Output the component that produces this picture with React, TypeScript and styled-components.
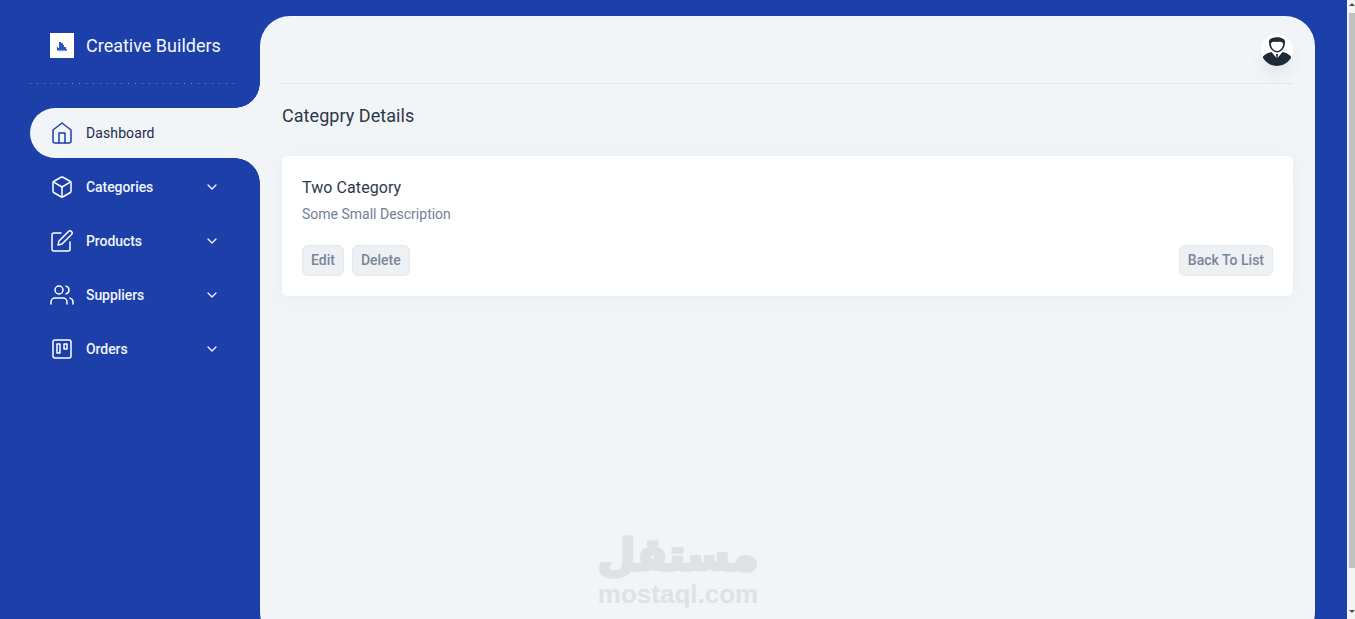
import React from "react";
import styled, { createGlobalStyle } from "styled-components";
import { FiBox, FiChevronDown, FiEdit, FiHome, FiTrello, FiUsers } from "react-icons/fi";

const BLUE = "#1c3faa";
const LIGHT = "#f1f5f8";

const GlobalStyle = createGlobalStyle`
  html, body {
    margin: 0;
    height: 100%;
    overflow: hidden;
    font-family: "Roboto", "Liberation Sans", sans-serif;
  }
`;

const Page = styled.div`
  display: flex;
  height: 619px;
  overflow: hidden;
  background: ${BLUE};
`;

const Sidebar = styled.nav`
  flex: 0 0 230px;
  margin-left: 30px;
  display: flex;
  flex-direction: column;
`;

const Brand = styled.div`
  display: flex;
  align-items: center;
  gap: 12px;
  height: 84px;
  padding: 6px 0 0 20px;
  box-sizing: border-box;
  margin-right: 22px;
  background-image: linear-gradient(to right, rgba(255, 255, 255, 0.4) 1px, transparent 1px);
  background-size: 7px 1px;
  background-repeat: repeat-x;
  background-position: left bottom;
`;

const LogoBox = styled.div`
  width: 24px;
  height: 25px;
  margin-top: 1px;
  background: #fff;
  display: flex;
  align-items: center;
  justify-content: center;
`;

const BrandName = styled.span`
  color: #f4f7fd;
  font-size: 18px;
  font-weight: 400;
`;

const Menu = styled.div`
  display: flex;
  flex-direction: column;
  gap: 4px;
  margin-top: 24px;
`;

const Item = styled.a<{ $active?: boolean }>`
  position: relative;
  display: flex;
  align-items: center;
  height: 50px;
  padding-left: 20px;
  color: ${(p) => (p.$active ? "#1f2a4d" : "#f1f4fb")};
  background: ${(p) => (p.$active ? LIGHT : "transparent")};
  border-radius: 25px 0 0 25px;
  font-size: 14px;
  font-weight: ${(p) => (p.$active ? 400 : 500)};
  letter-spacing: ${(p) => (p.$active ? "0.1px" : "-0.07px")};

  ${(p) =>
    p.$active &&
    `
    &::before, &::after {
      content: "";
      position: absolute;
      right: 0;
      width: 25px;
      height: 25px;
    }
    &::before {
      top: -25px;
      background: radial-gradient(circle at 0 0, ${BLUE} 24.5px, ${LIGHT} 25px);
    }
    &::after {
      bottom: -25px;
      background: radial-gradient(circle at 0 100%, ${BLUE} 24.5px, ${LIGHT} 25px);
    }
  `}
`;

const ItemIcon = styled.span<{ $active?: boolean }>`
  display: flex;
  width: 24px;
  margin-right: 12px;
  color: ${(p) => (p.$active ? BLUE : "#fff")};
`;

const ItemLabel = styled.span`
  flex: 1;
`;

const Caret = styled.span`
  display: flex;
  margin-right: 40px;
`;

const Main = styled.main`
  position: relative;
  flex: 0 0 1055px;
  box-sizing: border-box;
  height: 626px;
  margin-top: 16px;
  padding: 0 22px;
  background: ${LIGHT};
  border-radius: 30px;
`;

const TopBar = styled.header`
  display: flex;
  justify-content: flex-end;
  align-items: center;
  height: 68px;
  padding-top: 1px;
  box-sizing: border-box;
  border-bottom: 1px solid #e3e7ea;
`;

const Avatar = styled.div`
  width: 32px;
  height: 32px;
  border-radius: 50%;
  overflow: hidden;
  background: #fff;
  box-shadow: 0 10px 15px rgba(0, 0, 0, 0.05);
`;

const Title = styled.h2`
  margin: 21px 0 29px;
  font-size: 18px;
  line-height: 22px;
  font-weight: 400;
  letter-spacing: 0.05px;
  color: #2d3748;
`;

const Card = styled.section`
  height: 140px;
  box-sizing: border-box;
  padding: 21px 20px 20px;
  background: #fff;
  border-radius: 6px;
  box-shadow: 0 3px 20px rgba(0, 0, 0, 0.04);
`;

const CardTitle = styled.div`
  font-size: 16px;
  line-height: 22px;
  font-weight: 400;
  letter-spacing: 0.08px;
  color: #2d3748;
`;

const CardText = styled.div`
  margin-top: 5px;
  font-size: 14px;
  line-height: 20px;
  color: #718096;
`;

const Actions = styled.div`
  display: flex;
  gap: 8px;
  margin-top: 21px;
`;

const Button = styled.button<{ $push?: boolean }>`
  height: 31px;
  padding: 0 8px 2px;
  margin-left: ${(p) => (p.$push ? "auto" : "0")};
  background: #eef1f4;
  border: 1px solid #e5e9ee;
  border-radius: 6px;
  color: #7a8599;
  font-family: inherit;
  font-size: 14px;
  font-weight: 500;
`;

const Watermark = styled.div`
  position: absolute;
  left: 336px;
  top: 513px;
  width: 164px;
  text-align: center;
  color: #dde2e6;
  font-weight: 700;
`;

const WatermarkArabic = styled.div`
  font-family: "DejaVu Sans", sans-serif;
  font-size: 44px;
  line-height: 52px;
  -webkit-text-stroke: 3px #dde2e6;
`;

const WatermarkLatin = styled.div`
  font-family: "Liberation Sans", sans-serif;
  font-size: 26px;
  line-height: 26px;
`;

const Gutter = styled.div`
  flex: 0 0 32px;
`;

const ScrollTrack = styled.div`
  position: relative;
  flex: 0 0 8px;
  background: ${LIGHT};
`;

const ScrollThumb = styled.div`
  position: absolute;
  left: 2px;
  right: 0;
  top: 13px;
  height: 555px;
  background: #c1c1c1;
`;

const ScrollArrow = styled.div<{ $down?: boolean }>`
  position: absolute;
  right: 0;
  width: 0;
  height: 0;
  border-left: 3px solid transparent;
  border-right: 3px solid transparent;
  ${(p) =>
    p.$down
      ? "bottom: 6px; border-top: 3px solid #505050;"
      : "top: 3px; border-bottom: 3px solid #505050;"}
`;

const menu = [
  { label: "Categories", icon: FiBox },
  { label: "Products", icon: FiEdit },
  { label: "Suppliers", icon: FiUsers },
  { label: "Orders", icon: FiTrello },
];

export default function App() {
  return (
    <>
      <GlobalStyle />
      <Page>
        <Sidebar>
          <Brand>
            <LogoBox>
              <svg width="14" height="14" viewBox="0 0 14 14">
                <path d="M2 11 V8 H3 V9 H4 V3 H6 V4 H8 V6 H9 V8 H11 V10 H12 V11 Z" fill="#2f55b8" />
                <rect x="2" y="11" width="10" height="1" fill="#7f9ad6" />
                <rect x="4" y="12.5" width="6" height="1" fill="#dbe3f3" />
              </svg>
            </LogoBox>
            <BrandName>Creative Builders</BrandName>
          </Brand>
          <Menu>
            <Item $active>
              <ItemIcon $active>
                <FiHome size={24} strokeWidth={1.5} />
              </ItemIcon>
              <ItemLabel>Dashboard</ItemLabel>
            </Item>
            {menu.map(({ label, icon: Icon }) => (
              <Item key={label}>
                <ItemIcon>
                  <Icon size={24} strokeWidth={1.5} />
                </ItemIcon>
                <ItemLabel>{label}</ItemLabel>
                <Caret>
                  <FiChevronDown size={16} />
                </Caret>
              </Item>
            ))}
          </Menu>
        </Sidebar>
        <Main>
          <TopBar>
            <Avatar>
              <svg width="32" height="32" viewBox="0 0 32 32">
                <path d="M1 25 C2 21 6 19 10.5 18 L15.5 24 L15 20 H17 L16.5 24 L21.5 18 C26 19 30 21 31 25 C29 29 23 32 16 32 C9 32 3 29 1 25 Z" fill="#1f2937" />
                <path d="M15.2 24 H16.8 L17.6 29 L16 31 L14.4 29 Z" fill="#1f2937" />
                <path d="M8 8 C7.5 1.5 24.5 1.5 24 8 C24 12 22.5 17.5 16 18.5 C9.5 17.5 8 12 8 8 Z" fill="#1f2937" />
                <path d="M9.8 9.5 C12 7 14 8 16 8 C18 8 20 7 22.2 9.5 C22 13 20 16.6 16 17 C12 16.6 10 13 9.8 9.5 Z" fill="#fff" />
              </svg>
            </Avatar>
          </TopBar>
          <Title>Categpry Details</Title>
          <Card>
            <CardTitle>Two Category</CardTitle>
            <CardText>Some Small Description</CardText>
            <Actions>
              <Button>Edit</Button>
              <Button>Delete</Button>
              <Button $push>Back To List</Button>
            </Actions>
          </Card>
          <Watermark>
            <WatermarkArabic>مستقل</WatermarkArabic>
            <WatermarkLatin>mostaql.com</WatermarkLatin>
          </Watermark>
        </Main>
        <Gutter />
        <ScrollTrack>
          <ScrollArrow />
          <ScrollThumb />
          <ScrollArrow $down />
        </ScrollTrack>
      </Page>
    </>
  );
}
